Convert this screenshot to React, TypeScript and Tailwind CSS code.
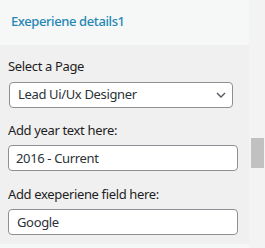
import React from 'react';

const font = { fontFamily: '"Noto Sans", "Open Sans", Arial, sans-serif' };

const App: React.FC = () => {
  return (
    <div className="w-[265px] h-[248px] flex bg-[#f3f3f3] overflow-hidden" style={font}>
      {/* panel */}
      <div className="w-[249px] flex flex-col">
        <div className="h-[45px] bg-[#f6f7f7] flex items-center px-[11px] pb-[3px]">
          <span className="text-[13px] font-medium tracking-[-0.4px] text-[#2587b5] leading-[20px]">Exeperiene details1</span>
        </div>
        <div className="bg-[#f0f0f0] pl-[8px] pt-[11px] pb-[9px] flex flex-col tracking-[-0.35px]">
          <label className="text-[13px] leading-[20px] text-[#1e1e1e] mb-[5px]">Select a Page</label>
          <div className="relative ml-[1px] w-[224px]">
            <select
              defaultValue="lead"
              className="appearance-none w-full h-[26px] bg-white border border-[#8c8f94] rounded-[4px] pl-[8px] pr-[24px] text-[13px] tracking-[-0.35px] text-[#2c3338] outline-none"
              style={font}
            >
              <option value="lead">Lead Ui/Ux Designer</option>
            </select>
            <svg
              className="absolute right-[7px] top-[11px] pointer-events-none"
              width="10"
              height="6"
              viewBox="0 0 10 6"
              fill="none"
            >
              <path d="M1 1l4 4 4-4" stroke="#50575e" strokeWidth="1.4" />
            </svg>
          </div>

          <label className="mt-[12px] text-[13px] leading-[20px] text-[#1e1e1e] mb-[5px]">Add year text here:</label>
          <input
            defaultValue="2016 - Current"
            className="w-[230px] h-[26px] bg-white border border-[#8c8f94] rounded-[4px] pl-[7px] text-[13px] tracking-[-0.35px] text-[#2c3338] outline-none"
            style={font}
          />

          <label className="mt-[13px] text-[13px] leading-[20px] text-[#1e1e1e] mb-[5px]">Add exeperiene field here:</label>
          <input
            defaultValue="Google"
            className="w-[230px] h-[26px] bg-white border border-[#8c8f94] rounded-[4px] pl-[8px] text-[13px] tracking-[-0.35px] text-[#2c3338] outline-none"
            style={font}
          />
        </div>
        <div className="flex-1 bg-[#f6f7f7]" />
      </div>
      {/* scrollbar */}
      <div className="w-[16px] pt-[138px] pl-[2px] pr-[1px]">
        <div className="h-[30px] bg-[#c1c1c1]" />
      </div>
    </div>
  );
};

export default App;
